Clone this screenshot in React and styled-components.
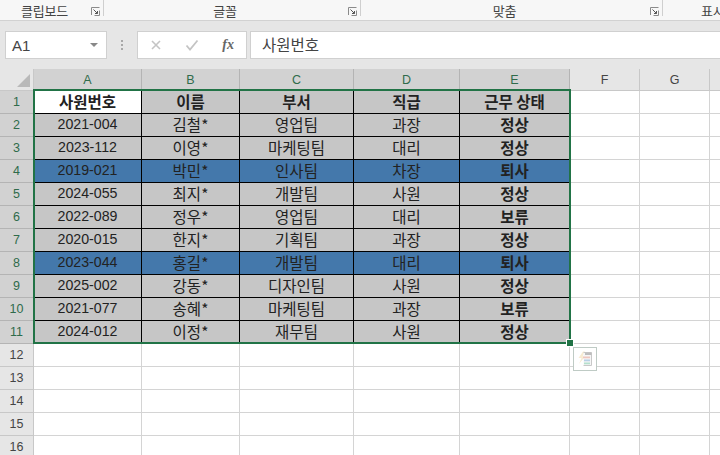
import styled, { createGlobalStyle } from "styled-components";

const GlobalStyle = createGlobalStyle`
  html, body {
    margin: 0;
    padding: 0;
    width: 720px;
    height: 455px;
    overflow: hidden;
    background: #fff;
  }
  * { box-sizing: border-box; }
`;

const KR = `"Noto Sans CJK KR", "Liberation Sans", sans-serif`;
const NUM = `"Liberation Sans", "Noto Sans CJK KR", sans-serif`;

const COLS = [
  { name: "A", w: 108 },
  { name: "B", w: 98 },
  { name: "C", w: 114 },
  { name: "D", w: 106 },
  { name: "E", w: 110 },
  { name: "F", w: 70 },
  { name: "G", w: 70 },
  { name: "", w: 70 }, // column H, its letter is past the window edge
];
const template = `34px ${COLS.map((c) => c.w + "px").join(" ")}`;

const ROWS = [
  ["사원번호", "이름", "부서", "직급", "근무 상태"],
  ["2021-004", "김철*", "영업팀", "과장", "정상"],
  ["2023-112", "이영*", "마케팅팀", "대리", "정상"],
  ["2019-021", "박민*", "인사팀", "차장", "퇴사"],
  ["2024-055", "최지*", "개발팀", "사원", "정상"],
  ["2022-089", "정우*", "영업팀", "대리", "보류"],
  ["2020-015", "한지*", "기획팀", "과장", "정상"],
  ["2023-044", "홍길*", "개발팀", "대리", "퇴사"],
  ["2025-002", "강동*", "디자인팀", "사원", "정상"],
  ["2021-077", "송혜*", "마케팅팀", "과장", "보류"],
  ["2024-012", "이정*", "재무팀", "사원", "정상"],
];
const BLUE_ROWS = [3, 7];
const EMPTY_ROWS = [12, 13, 14, 15, 16];

const Page = styled.div`
  width: 720px;
  height: 455px;
  overflow: hidden;
  display: flex;
  flex-direction: column;
  background: #e6e6e6;
`;
const Ribbon = styled.div`
  height: 21px;
  display: flex;
  overflow: hidden;
  background: #f7f7f7;
  border-bottom: 1px solid #d2d2d2;
  flex-shrink: 0;
`;
const Group = styled.div`
  width: ${(p) => p.$w}px;
  height: 16px;
  flex-shrink: 0;
  display: flex;
  align-items: flex-end;
  border-right: 1px solid #cfcfcf;
  padding-right: 3px;
`;
const GroupLabel = styled.span`
  flex: 1;
  position: relative;
  top: 3px;
  left: -1px;
  text-align: center;
  font: 13px/16px ${KR};
  letter-spacing: -0.2px;
  color: #444;
  white-space: nowrap;
`;
const FormulaBar = styled.div`
  height: 48px;
  padding: 10px 0 0 5px;
  display: flex;
  align-items: flex-start;
  flex-shrink: 0;
  background: #e6e6e6;
`;
const NameBox = styled.div`
  width: 102px;
  height: 28px;
  background: #fff;
  border: 1px solid #d0d0d0;
  display: flex;
  align-items: center;
  justify-content: space-between;
  padding: 0 8px 0 6px;
  font: 15px ${NUM};
  color: #444;
`;
const Caret = styled.span`
  width: 0;
  height: 0;
  border-left: 4px solid transparent;
  border-right: 4px solid transparent;
  border-top: 4px solid #888;
`;
const Grip = styled.div`
  width: 30px;
  height: 28px;
  display: flex;
  flex-direction: column;
  align-items: center;
  justify-content: center;
  gap: 2px;
`;
const GripDot = styled.span`
  width: 2px;
  height: 2px;
  background: #a8a8a8;
`;
const FormulaButtons = styled.div`
  width: 110px;
  height: 28px;
  background: #fff;
  border: 1px solid #d0d0d0;
  display: flex;
  align-items: center;
  padding: 0 12px;
  justify-content: space-between;
`;
const Fx = styled.span`
  font: italic bold 14px "Liberation Serif", serif;
  color: #666;
`;
const FormulaInput = styled.div`
  flex: 1;
  height: 28px;
  margin-left: 3px;
  background: #fff;
  border: 1px solid #d0d0d0;
  border-right: none;
  padding-left: 11px;
  font: 15.5px/24px ${KR};
  color: #444;
`;
const Sheet = styled.div`
  position: relative;
  flex: 1;
  overflow: hidden;
  display: grid;
  grid-template-columns: ${template};
  grid-auto-rows: 23px;
  grid-template-rows: 22px;
  align-content: start;
  background: #fff;
`;
const Corner = styled.div`
  position: relative;
  background: #e6e6e6;
  border-right: 1px solid #c8c8c8;
  border-bottom: 1px solid #c8c8c8;
  &::after {
    content: "";
    position: absolute;
    right: 3px;
    bottom: 3px;
    width: 0;
    height: 0;
    border-left: 13px solid transparent;
    border-bottom: 13px solid #b9b9b9;
  }
`;
const ColHeader = styled.div`
  display: flex;
  align-items: center;
  justify-content: center;
  font: 12.5px ${NUM};
  background: ${(p) => (p.$on ? "#d2d2d2" : "#e6e6e6")};
  color: ${(p) => (p.$on ? "#2f6b4b" : "#444")};
  border-right: 1px solid ${(p) => (p.$on ? "#b4b4b4" : "#c8c8c8")};
  border-bottom: 1px solid ${(p) => (p.$on ? "#b4b4b4" : "#c8c8c8")};
`;
const RowHeader = styled.div`
  display: flex;
  align-items: center;
  justify-content: center;
  font: 12.5px ${NUM};
  background: ${(p) => (p.$on ? "#d2d2d2" : "#e6e6e6")};
  color: ${(p) => (p.$on ? "#2f6b4b" : "#444")};
  border-right: 1px solid #c8c8c8;
  border-bottom: 1px solid ${(p) => (p.$on ? "#b4b4b4" : "#c8c8c8")};
`;
const Cell = styled.div`
  display: flex;
  align-items: center;
  justify-content: center;
  padding-bottom: 1px;
  background: ${(p) => p.$bg};
  border-right: 1px solid #000;
  border-bottom: 1px solid #000;
  font-family: ${(p) => (p.$num ? NUM : KR)};
  font-size: ${(p) => (p.$num ? 14.2 : 15.5)}px;
  font-weight: ${(p) => (p.$bold ? 700 : 400)};
  color: #222;
  white-space: nowrap;
  line-height: 1;
`;
const EmptyCell = styled.div`
  background: #fff;
  border-right: 1px solid #d4d4d4;
  border-bottom: 1px solid #d4d4d4;
`;
const Selection = styled.div`
  position: absolute;
  left: 33px;
  top: 20px;
  width: 538px;
  height: 255px;
  border: 2px solid #217346;
  pointer-events: none;
`;
const FillHandle = styled.div`
  position: absolute;
  left: 567px;
  top: 271px;
  width: 6px;
  height: 6px;
  background: #217346;
  outline: 1px solid #fff;
`;
const QuickAnalysis = styled.div`
  position: absolute;
  left: 573px;
  top: 278px;
  width: 24px;
  height: 24px;
  background: #fff;
  border: 1px solid #bfcbc5;
  display: flex;
  align-items: center;
  justify-content: center;
`;

const Launcher = () => (
  <svg width="9" height="9" viewBox="0 0 9 9" fill="none">
    <path d="M.5 8V.5H8.5" stroke="#8a8a8a" />
    <path d="M8.5 3.5V8.5H3.5" stroke="#8a8a8a" />
    <path d="M2.5 2.5L6.5 6.5M6.5 4V6.5H4" stroke="#555" />
  </svg>
);

const App = () => {
  return (
    <Page>
      <GlobalStyle />
      <Ribbon>
        <Group $w={104}>
          <GroupLabel>클립보드</GroupLabel>
          <Launcher />
        </Group>
        <Group $w={257}>
          <GroupLabel>글꼴</GroupLabel>
          <Launcher />
        </Group>
        <Group $w={302}>
          <GroupLabel>맞춤</GroupLabel>
          <Launcher />
        </Group>
        <Group $w={132}>
          <GroupLabel>표시 형식</GroupLabel>
        </Group>
      </Ribbon>
      <FormulaBar>
        <NameBox>
          A1
          <Caret />
        </NameBox>
        <Grip>
          <GripDot />
          <GripDot />
          <GripDot />
        </Grip>
        <FormulaButtons>
          <svg width="12" height="12" viewBox="0 0 12 12">
            <path d="M2 2l8 8M10 2l-8 8" stroke="#c4c4c4" strokeWidth="1.6" />
          </svg>
          <svg width="14" height="12" viewBox="0 0 14 12" fill="none">
            <path d="M1.5 6.5l3.5 4 7.5-9" stroke="#c4c4c4" strokeWidth="1.8" />
          </svg>
          <Fx>fx</Fx>
        </FormulaButtons>
        <FormulaInput>사원번호</FormulaInput>
      </FormulaBar>
      <Sheet>
        <Corner />
        {COLS.map((c, i) => (
          <ColHeader key={i} $on={i < 5}>
            {c.name}
          </ColHeader>
        ))}
        {ROWS.map((row, r) => (
          <Row key={r} row={row} r={r} />
        ))}
        {EMPTY_ROWS.map((n) => (
          <Blank key={n} n={n} />
        ))}
        <Selection />
        <FillHandle />
        <QuickAnalysis>
          <svg width="18" height="18" viewBox="0 0 18 18" fill="none">
            <path d="M7 1.5L2.5 8H5.5L3 14L9 6.5H6.5L9 1.5z" fill="#f8ecd2" />
            <path d="M7.5 2.5H15.5V15.5H7.5" fill="#f6f6f6" stroke="#c8c8c8" />
            <rect x="9" y="2.5" width="6.5" height="2.5" fill="#bdbdbd" />
            <rect x="7" y="6.5" width="7" height="1.8" fill="#eec7bf" />
            <rect x="8" y="9.5" width="6" height="1.8" fill="#b8d0e6" />
            <rect x="8" y="12.5" width="6" height="1.8" fill="#b5e0cd" />
          </svg>
        </QuickAnalysis>
      </Sheet>
    </Page>
  );
};

const Row = ({ row, r }) => (
  <>
    <RowHeader $on>{r + 1}</RowHeader>
    {row.map((text, c) => {
      let bg = "#c6c6c6";
      if (BLUE_ROWS.includes(r)) bg = "#4478ab";
      if (r === 0 && c === 0) bg = "#fff";
      return (
        <Cell key={c} $bg={bg} $num={c === 0 && r > 0} $bold={r === 0 || c === 4}>
          {text}
        </Cell>
      );
    })}
    <EmptyCell />
    <EmptyCell />
    <EmptyCell />
  </>
);

const Blank = ({ n }) => (
  <>
    <RowHeader>{n}</RowHeader>
    {COLS.map((c, i) => (
      <EmptyCell key={i} />
    ))}
  </>
);

export default App;
